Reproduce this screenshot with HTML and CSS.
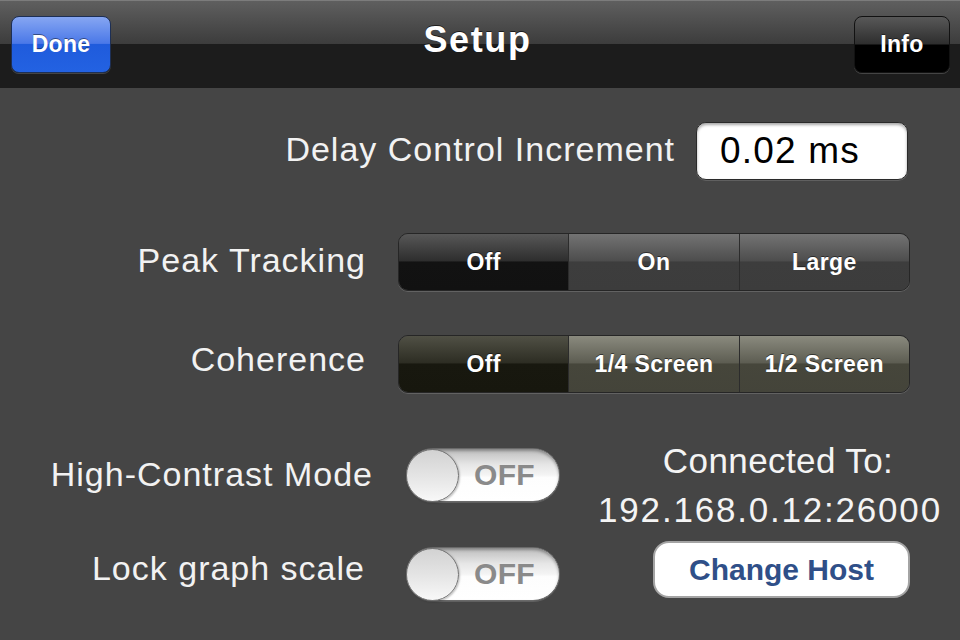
FILE: index.html
```html
<!DOCTYPE html>
<html>
<head>
<meta charset="utf-8">
<title>Setup</title>
<link rel="stylesheet" href="styles.css">
</head>
<body>
<div class="screen">
  <header class="navbar">
    <button class="nav-btn btn-done">Done</button>
    <h1 class="nav-title">Setup</h1>
    <button class="nav-btn btn-info">Info</button>
  </header>
  <main class="content">
    <div class="row-delay">
      <span class="label raised">Delay Control Increment</span>
      <div class="textfield">0.02 ms</div>
    </div>
    <div class="seg-row">
      <span class="label seg-label raised">Peak Tracking</span>
      <div class="segmented seg-dark">
        <div class="seg selected">Off</div>
        <div class="seg">On</div>
        <div class="seg">Large</div>
      </div>
    </div>
    <div class="seg-row seg-row-second">
      <span class="label seg-label raised-more">Coherence</span>
      <div class="segmented seg-olive">
        <div class="seg selected">Off</div>
        <div class="seg">1/4 Screen</div>
        <div class="seg">1/2 Screen</div>
      </div>
    </div>
    <div class="bottom">
      <div class="switches">
        <div class="switch-row">
          <span class="label switch-label">High-Contrast Mode</span>
          <div class="switch"><span class="knob"></span><span class="switch-text">OFF</span></div>
        </div>
        <div class="switch-row switch-row-second">
          <span class="label switch-label lock-label">Lock graph scale</span>
          <div class="switch"><span class="knob"></span><span class="switch-text">OFF</span></div>
        </div>
      </div>
      <div class="host">
        <div class="host-line connected">Connected To:</div>
        <div class="host-line ip">192.168.0.12:26000</div>
        <button class="change-host">Change Host</button>
      </div>
    </div>
  </main>
</div>
</body>
</html>
```
FILE: styles.css
```css
* { box-sizing: border-box; }

html, body {
  margin: 0;
  padding: 0;
}

body {
  width: 960px;
  height: 640px;
  overflow: hidden;
  background: #454545;
  font-family: "Liberation Sans", Arial, Helvetica, sans-serif;
  color: #f2f2f2;
}

.screen {
  width: 960px;
  height: 640px;
  display: flex;
  flex-direction: column;
}

/* ---------- Nav bar ---------- */
.navbar {
  height: 88px;
  flex: none;
  display: flex;
  align-items: flex-start;
  padding: 15px 10px 0 11px;
  border-top: 1px solid #7c7c7c;
  background: linear-gradient(#5f5f5f 0px, #3c3c3c 43px, #1c1c1c 43px, #1c1c1c 100%);
}

.nav-title {
  flex: 1;
  margin: 0;
  padding-right: 10px;
  text-align: center;
  font-size: 36px;
  font-weight: bold;
  letter-spacing: 1.6px;
  line-height: 48px;
  color: #fff;
  text-shadow: 0 -1px 0 rgba(0,0,0,0.6);
}

.nav-btn {
  height: 57px;
  border-radius: 8px;
  font-family: "Liberation Sans", Arial, sans-serif;
  font-size: 23px;
  font-weight: bold;
  letter-spacing: 0.3px;
  color: #fff;
  padding: 0;
  text-shadow: 0 -1px 0 rgba(0,0,0,0.45);
  box-shadow: 0 1px 0 rgba(255,255,255,0.18);
}

.btn-done {
  width: 100px;
  border: 1px solid #1d2f55;
  background: linear-gradient(#86a6f2 0%, #4a78e8 48%, #1f5bdc 50%, #2362e2 100%);
}

.btn-info {
  width: 96px;
  border: 1px solid #121212;
  background: linear-gradient(#585858 0%, #2e2e2e 49%, #000 51%, #000 100%);
}

/* ---------- Content ---------- */
.content {
  flex: 1;
  padding-top: 34px;
}

.label {
  font-size: 34px;
  letter-spacing: 1px;
  color: #f2f2f2;
  white-space: nowrap;
}

.raised { margin-bottom: 4px; }
.raised-more { margin-bottom: 9px; }

.row-delay {
  display: flex;
  justify-content: flex-end;
  align-items: center;
  gap: 21px;
  padding-right: 52px;
}

.textfield {
  width: 212px;
  height: 58px;
  background: #fff;
  border: 1px solid #2a2a2a;
  border-radius: 10px;
  box-shadow: inset 0 2px 3px rgba(0,0,0,0.35), 0 1px 0 rgba(255,255,255,0.15);
  color: #000;
  font-size: 37px;
  letter-spacing: 1.2px;
  line-height: 56px;
  padding-left: 23px;
}

.seg-row {
  display: flex;
  align-items: center;
  gap: 32px;
  margin-top: 53px;
}

.seg-row-second { margin-top: 44px; }

.seg-label {
  width: 366px;
  text-align: right;
}

.segmented {
  width: 512px;
  height: 58px;
  display: flex;
  border: 1px solid #262626;
  border-radius: 10px;
  overflow: hidden;
  box-shadow: 0 1px 0 rgba(255,255,255,0.16);
}

.seg {
  flex: 1;
  display: flex;
  align-items: center;
  justify-content: center;
  font-size: 23px;
  font-weight: bold;
  letter-spacing: 0.4px;
  color: #fff;
  text-shadow: 0 -1px 0 rgba(0,0,0,0.5);
  border-left: 1px solid #2c2c2c;
}

.seg:first-child { border-left: none; }

.seg-dark .seg {
  background: linear-gradient(#737373 0%, #4d4d4d 48%, #3d3d3d 50%, #3c3c3c 100%);
}

.seg-dark .seg.selected {
  background: linear-gradient(#575757 0%, #2e2e2e 48%, #121212 50%, #111 100%);
}

.seg-olive .seg {
  background: linear-gradient(#8a8a7e 0%, #5d5d52 48%, #46463b 50%, #44443a 100%);
}

.seg-olive .seg.selected {
  background: linear-gradient(#505045 0%, #2d2d23 48%, #18180f 50%, #17170e 100%);
}

/* ---------- Bottom section ---------- */
.bottom {
  display: flex;
  margin-top: 43px;
}

.switches {
  width: 560px;
  padding-top: 12px;
}

.switch-row {
  display: flex;
  align-items: center;
  gap: 33px;
  height: 54px;
}

.switch-row-second { margin-top: 45px; }

.switch-label {
  width: 373px;
  text-align: right;
  margin-bottom: 2px;
}

.lock-label {
  padding-right: 8px;
  margin-bottom: 12px;
}

.switch {
  width: 154px;
  height: 54px;
  border-radius: 27px;
  border: 1px solid #6a6a6a;
  background: linear-gradient(#bcbcbc 0%, #e6e6e6 30%, #f4f4f4 50%, #fdfdfd 55%, #fff 100%);
  box-shadow: inset 0 2px 3px rgba(0,0,0,0.3), 0 1px 0 rgba(255,255,255,0.15);
  display: flex;
  align-items: center;
}

.knob {
  width: 53px;
  height: 53px;
  margin-left: -1px;
  border-radius: 50%;
  border: 1px solid #727272;
  background: linear-gradient(#d2d2d2 0%, #e4e4e4 50%, #f8f8f8 100%);
  box-shadow: 1px 1px 2px rgba(0,0,0,0.25);
  flex: none;
}

.switch-text {
  margin-left: 15px;
  font-size: 30px;
  font-weight: bold;
  color: #8a8a8a;
  letter-spacing: 0.3px;
}

.host {
  margin-left: 38px;
  width: 344px;
  display: flex;
  flex-direction: column;
  align-items: center;
}

.host-line {
  font-size: 35px;
  line-height: 49px;
  color: #f4f4f4;
  white-space: nowrap;
}

.connected {
  letter-spacing: 0.4px;
  margin-left: 16px;
}

.ip {
  letter-spacing: 1.8px;
}

.change-host {
  margin-top: 7px;
  margin-left: 23px;
  width: 257px;
  height: 57px;
  background: #fff;
  border: 2px solid #a4a4a4;
  border-radius: 16px;
  font-family: "Liberation Sans", Arial, sans-serif;
  font-size: 30px;
  font-weight: bold;
  color: #2f4f88;
  padding: 0;
}
```
